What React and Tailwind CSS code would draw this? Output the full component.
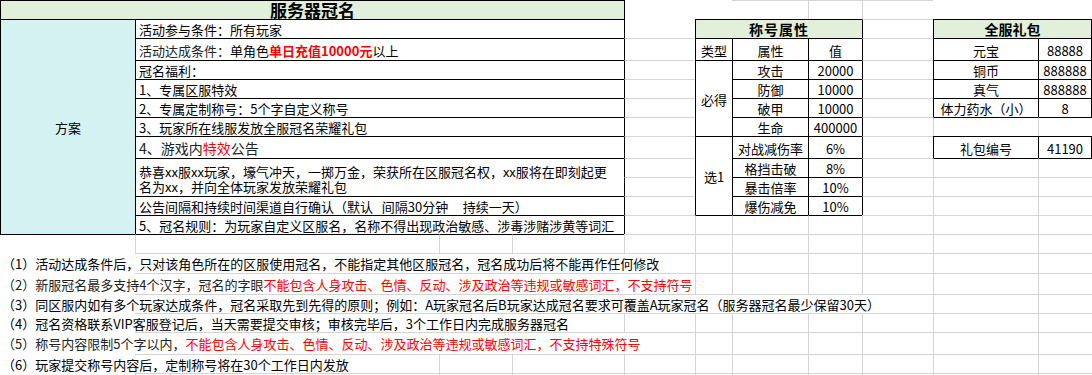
import React from "react";

const COL_START = [
  "col-start-1", "col-start-2", "col-start-3", "col-start-4", "col-start-5", "col-start-6",
  "col-start-7", "col-start-8", "col-start-9", "col-start-10", "col-start-11",
];
const ROW_START = [
  "row-start-1", "row-start-2", "row-start-3", "row-start-4", "row-start-5", "row-start-6",
  "row-start-7", "row-start-8", "row-start-9", "row-start-10", "row-start-11", "row-start-12",
  "row-start-13", "row-start-14", "row-start-15", "row-start-16", "row-start-17", "row-start-18",
  "row-start-19", "row-start-20",
];
const COL_SPAN = { 1: "col-span-1", 2: "col-span-2", 3: "col-span-3", 4: "col-span-4" };
const ROW_SPAN = { 1: "row-span-1", 2: "row-span-2", 4: "row-span-4", 11: "row-span-11" };
const TOP = { k: "border-t border-t-black", g: "border-t border-t-[#d4d4d4]", n: "" };
const LEFT = { k: "border-l border-l-black", g: "border-l border-l-[#d4d4d4]", n: "" };

const NROWS = 20;
const NCOLS = 11;
const GREEN = "bg-[#e2efda]";
const RED = "text-[#ff0000]";

const cells = [
  // 服务器冠名
  { r: 0, c: 0, cs: 4, tbl: true, bg: GREEN, center: true, title: true, content: <span className="text-[17px] font-bold">服务器冠名</span> },
  { r: 1, c: 0, rs: 11, tbl: true, bg: "bg-[#d5f2f2]", center: true, content: "方案" },
  { r: 1, c: 1, cs: 3, tbl: true, content: "活动参与条件：所有玩家" },
  {
    r: 2, c: 1, cs: 3, tbl: true,
    content: (
      <span>
        <span className="text-[#222]">活动达成条件：</span>单角色<b className={RED}>单日充值10000元</b>以上
      </span>
    ),
  },
  { r: 3, c: 1, cs: 3, tbl: true, content: "冠名福利：" },
  { r: 4, c: 1, cs: 3, tbl: true, content: "1、专属区服特效" },
  { r: 5, c: 1, cs: 3, tbl: true, content: "2、专属定制称号：5个字自定义称号" },
  { r: 6, c: 1, cs: 3, tbl: true, content: "3、玩家所在线服发放全服冠名荣耀礼包" },
  {
    r: 7, c: 1, cs: 3, tbl: true,
    content: (
      <span className="text-[14px] text-[#222]">
        4、游戏内<span className={RED}>特效</span>公告
      </span>
    ),
  },
  {
    r: 8, c: 1, cs: 3, rs: 2, tbl: true, bottom: true,
    content: (
      <span>
        恭喜xx服xx玩家，壕气冲天，一掷万金，荣获所在区服冠名权，xx服将在即刻起更
        <br />
        名为xx，并向全体玩家发放荣耀礼包
      </span>
    ),
  },
  { r: 10, c: 1, cs: 3, tbl: true, content: <span className="whitespace-pre">公告间隔和持续时间渠道自行确认（默认   间隔30分钟     持续一天）</span> },
  { r: 11, c: 1, cs: 3, tbl: true, content: "5、冠名规则：为玩家自定义区服名，名称不得出现政治敏感、涉毒涉赌涉黄等词汇" },

  // 称号属性
  { r: 1, c: 5, cs: 3, tbl: true, bg: GREEN, center: true, content: <span className="text-[14px] font-bold tracking-[1px]">称号属性</span> },
  { r: 2, c: 5, tbl: true, center: true, content: "类型" },
  { r: 2, c: 6, tbl: true, center: true, content: "属性" },
  { r: 2, c: 7, tbl: true, center: true, content: "值" },
  { r: 3, c: 5, rs: 4, tbl: true, center: true, content: "必得" },
  { r: 3, c: 6, tbl: true, center: true, content: "攻击" },
  { r: 3, c: 7, tbl: true, center: true, content: "20000" },
  { r: 4, c: 6, tbl: true, center: true, content: "防御" },
  { r: 4, c: 7, tbl: true, center: true, content: "10000" },
  { r: 5, c: 6, tbl: true, center: true, content: "破甲" },
  { r: 5, c: 7, tbl: true, center: true, content: "10000" },
  { r: 6, c: 6, tbl: true, center: true, content: "生命" },
  { r: 6, c: 7, tbl: true, center: true, content: "400000" },
  { r: 7, c: 5, rs: 4, tbl: true, center: true, content: "选1" },
  { r: 7, c: 6, tbl: true, center: true, content: "对战减伤率" },
  { r: 7, c: 7, tbl: true, center: true, content: "6%" },
  { r: 8, c: 6, tbl: true, center: true, content: "格挡击破" },
  { r: 8, c: 7, tbl: true, center: true, content: "8%" },
  { r: 9, c: 6, tbl: true, center: true, content: "暴击倍率" },
  { r: 9, c: 7, tbl: true, center: true, content: "10%" },
  { r: 10, c: 6, tbl: true, center: true, content: "爆伤减免" },
  { r: 10, c: 7, tbl: true, center: true, content: "10%" },

  // 全服礼包
  { r: 1, c: 9, cs: 2, tbl: true, right: true, bg: GREEN, center: true, content: <span className="text-[14px] font-bold">全服礼包</span> },
  { r: 2, c: 9, tbl: true, center: true, content: "元宝" },
  { r: 2, c: 10, tbl: true, right: true, center: true, content: "88888" },
  { r: 3, c: 9, tbl: true, center: true, content: "铜币" },
  { r: 3, c: 10, tbl: true, right: true, center: true, content: "888888" },
  { r: 4, c: 9, tbl: true, center: true, content: "真气" },
  { r: 4, c: 10, tbl: true, right: true, center: true, content: "888888" },
  { r: 5, c: 9, tbl: true, center: true, content: "体力药水（小）" },
  { r: 5, c: 10, tbl: true, right: true, center: true, content: "8" },
  { r: 7, c: 9, tbl: true, center: true, content: "礼包编号" },
  { r: 7, c: 10, tbl: true, right: true, center: true, content: "41190" },
];

// notes below the tables; text in column A runs over the empty cells to its right
const notes = [
  { cover: 4, content: "（1）活动达成条件后，只对该角色所在的区服使用冠名，不能指定其他区服冠名，冠名成功后将不能再作任何修改" },
  {
    cover: 4,
    content: (
      <span className="text-[#222]">
        （2）新服冠名最多支持4个汉字，冠名的字眼<span className={RED}>不能包含人身攻击、色情、反动、涉及政治等违规或敏感词汇，不支持符号</span>
      </span>
    ),
  },
  { cover: 8, content: "（3）同区服内如有多个玩家达成条件，冠名采取先到先得的原则；例如：A玩家冠名后B玩家达成冠名要求可覆盖A玩家冠名（服务器冠名最少保留30天）" },
  { cover: 3, content: "（4）冠名资格联系VIP客服登记后，当天需要提交审核；审核完毕后，3个工作日内完成服务器冠名" },
  {
    cover: 4,
    content: (
      <span className="text-[#222]">
        （5）称号内容限制5个字以内，<span className={RED}>不能包含人身攻击、色情、反动、涉及政治等违规或敏感词汇，不支持特殊符号</span>
      </span>
    ),
  },
  { cover: 1, content: "（6）玩家提交称号内容后，定制称号将在30个工作日内发放" },
];

notes.forEach((n, i) => {
  cells.push({ r: 13 + i, c: 0, note: true, cover: n.cover, content: n.content });
});

const overrides = {
  "0-4": { t: "n" },
  "1-4": { t: "n" },
  "0-5": { t: "n", l: "n" },
  "0-6": { l: "n" },
  "0-9": { t: "n", l: "n" },
  "0-10": { t: "n", l: "n" },
};

function buildGrid() {
  const owner = Array.from({ length: NROWS }, () => Array(NCOLS).fill(null));
  cells.forEach((cell) => {
    const rs = cell.rs || 1;
    const cs = cell.cs || 1;
    for (let r = cell.r; r < cell.r + rs; r++) {
      for (let c = cell.c; c < cell.c + cs; c++) owner[r][c] = cell;
    }
  });

  const isTbl = (r, c) => r >= 0 && c >= 0 && owner[r][c] && owner[r][c].tbl;

  const noteCover = {};
  cells.filter((x) => x.note).forEach((n) => (noteCover[n.r] = n.cover));

  const all = [];
  for (let r = 0; r < NROWS; r++) {
    for (let c = 0; c < NCOLS; c++) {
      const o = owner[r][c];
      if (o) {
        if (o.r === r && o.c === c) {
          all.push({
            ...o,
            t: o.tbl ? "k" : "n",
            l: o.tbl ? "k" : "n",
          });
        }
        continue;
      }
      let t = isTbl(r - 1, c) ? "k" : "g";
      let l = isTbl(r, c - 1) ? "k" : "g";
      if (c === 0) {
        l = "n";
        if (!isTbl(r - 1, c)) t = "n";
      }
      if (noteCover[r] !== undefined && c >= 1 && c <= noteCover[r]) l = "n";
      const ov = overrides[`${r}-${c}`];
      if (ov) {
        if (ov.t) t = ov.t;
        if (ov.l) l = ov.l;
      }
      all.push({ r, c, t, l });
    }
  }
  return all;
}

function Cell({ cell }) {
  const cls = [
    COL_START[cell.c],
    ROW_START[cell.r],
    COL_SPAN[cell.cs || 1],
    ROW_SPAN[cell.rs || 1],
    TOP[cell.t],
    LEFT[cell.l],
    cell.right ? "border-r border-r-black" : "",
    cell.bg || "",
    "flex min-w-0",
  ];
  if (cell.content !== undefined) {
    if (cell.note) {
      cls.push("items-center pl-[2px] pt-px whitespace-nowrap overflow-visible relative z-10");
    } else if (cell.title) {
      cls.push("items-center justify-center leading-[18px] whitespace-nowrap");
    } else if (cell.center) {
      cls.push("items-center justify-center pt-px whitespace-nowrap");
    } else if (cell.bottom) {
      cls.push("items-end pl-[3px] pb-[2px] leading-[15px]");
    } else {
      cls.push("items-center pl-[3px] pt-px whitespace-nowrap");
    }
  }
  return <div className={cls.join(" ")}>{cell.content}</div>;
}

export default function App() {
  const grid = buildGrid();
  return (
    <div className="w-[1092px] h-[375px] overflow-hidden bg-white text-black text-[13px] leading-[17px] font-['Noto_Sans_CJK_SC','Noto_Sans',sans-serif]">
      <div className="grid grid-cols-[135px_304px_73px_112px_71px_37px_76px_54px_71px_105px_54px] grid-rows-[19px_19px_22px_19px_19px_19px_19px_22px_19px_19px_19px_19px_19px_20px_21px_19px_19px_22px_19px_2px]">
        {grid.map((cell) => (
          <Cell key={`${cell.r}-${cell.c}`} cell={cell} />
        ))}
      </div>
    </div>
  );
}
